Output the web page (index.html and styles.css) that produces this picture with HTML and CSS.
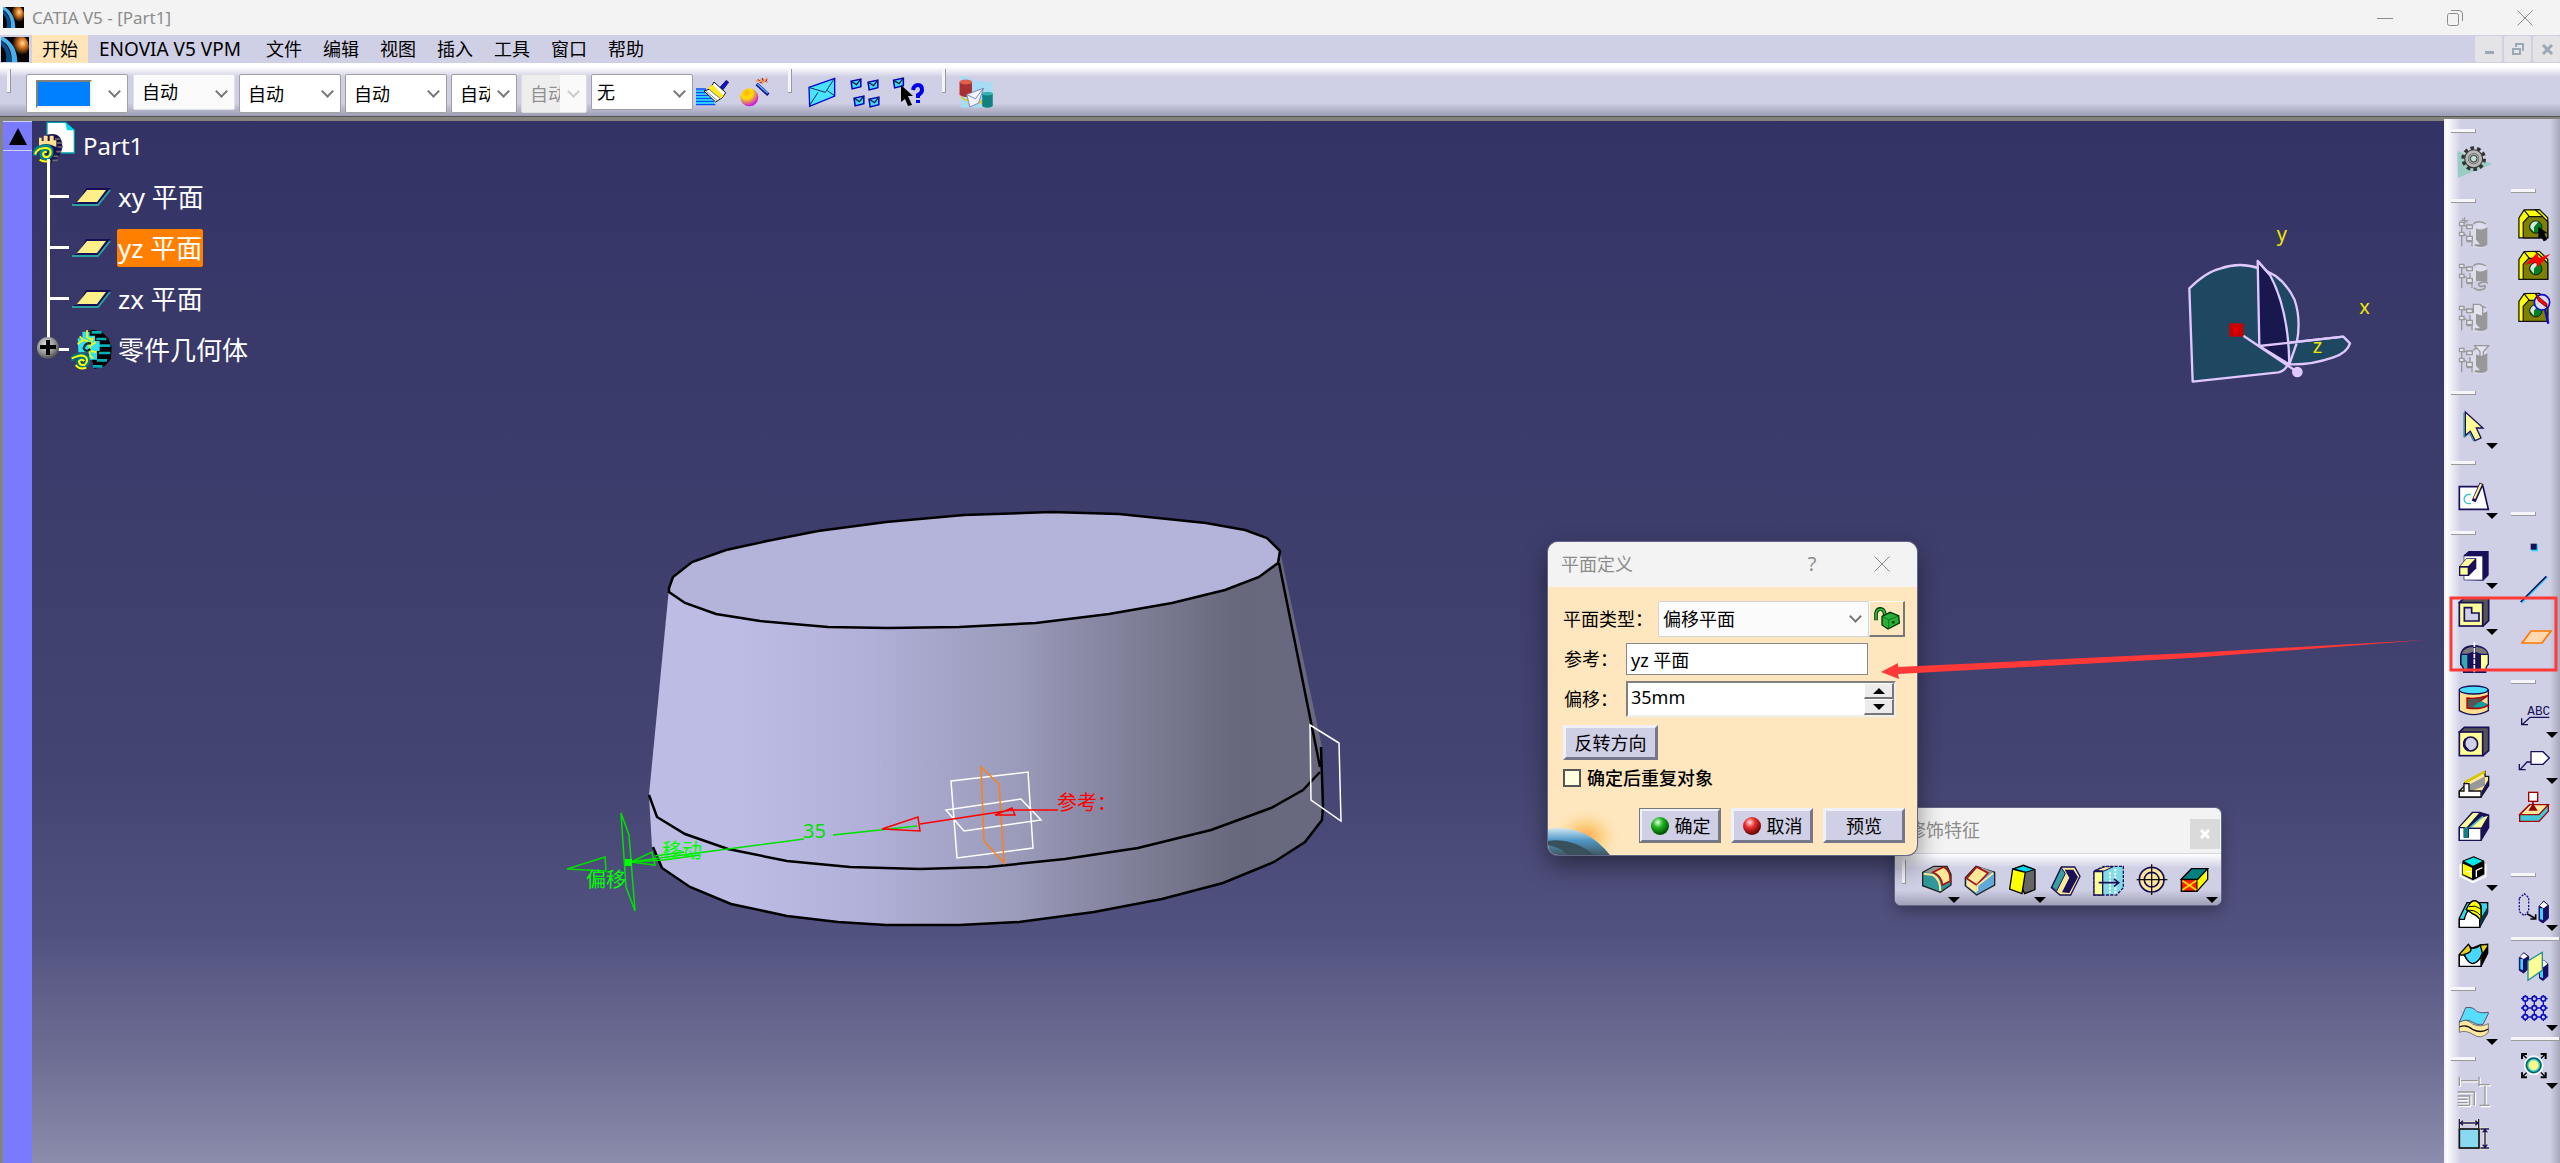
FILE: index.html
```html
<!DOCTYPE html>
<html lang="zh-CN">
<head>
<meta charset="utf-8">
<title>CATIA V5 - [Part1]</title>
<link rel="stylesheet" href="styles.css">
</head>
<body>
<svg class="defs" aria-hidden="true">
  <defs>
    <radialGradient id="glow" cx="65%" cy="35%" r="55%"><stop offset="0" stop-color="#ffd9a0"/><stop offset=".4" stop-color="#d87820"/><stop offset="1" stop-color="#0a0404"/></radialGradient>
    <radialGradient id="ball" cx="35%" cy="25%" r="80%"><stop offset="0" stop-color="#ffb000"/><stop offset=".4" stop-color="#ffe000"/><stop offset="1" stop-color="#c000ff"/></radialGradient>
    <radialGradient id="green" cx="38%" cy="30%" r="70%"><stop offset="0" stop-color="#e8ffe0"/><stop offset=".4" stop-color="#20b820"/><stop offset="1" stop-color="#004a00"/></radialGradient>
    <radialGradient id="red" cx="38%" cy="30%" r="70%"><stop offset="0" stop-color="#ffe8e0"/><stop offset=".4" stop-color="#f03030"/><stop offset="1" stop-color="#600000"/></radialGradient>
    <radialGradient id="steel" cx="40%" cy="35%" r="70%"><stop offset="0" stop-color="#e0e0e0"/><stop offset=".6" stop-color="#909090"/><stop offset="1" stop-color="#404040"/></radialGradient>
    <linearGradient id="side" x1="0" x2="1"><stop offset="0" stop-color="#bcbce4"/><stop offset=".13" stop-color="#bcbce4"/><stop offset=".33" stop-color="#b0b0d8"/><stop offset=".55" stop-color="#9a9aba"/><stop offset=".72" stop-color="#7f7f98"/><stop offset=".87" stop-color="#68687c"/><stop offset="1" stop-color="#686880"/></linearGradient>
    <symbol id="logo" viewBox="0 0 24 24"><rect width="24" height="24" fill="#080404"/><ellipse cx="16" cy="9" rx="8" ry="10" fill="url(#glow)"/><path d="M2 0C9 4 14 12 14 24H9C10 14 6 6 0 3V0Z" fill="#48b0f0"/><path d="M0 3C6 8 9 15 9 24H4Q6 14 0 8Z" fill="#0a4c88"/></symbol>
    <symbol id="mail" viewBox="0 0 12 11"><path d="M1 3L10 1V8L2 10Z" fill="#48d8ff" stroke="#0000c0" stroke-width="1.4"/><path d="M1 3L6 6L10 1" fill="none" stroke="#102040" stroke-width="1.2"/></symbol>
    <symbol id="plane" viewBox="0 0 40 20"><path d="M14 1H39L27 18H0L3 16H6Z" fill="#160f55"/><path d="M0 18H26L38 3" fill="none" stroke="#2aa0a0" stroke-width="2"/><path d="M15 3H34L25 15H5Z" fill="#ffef88"/></symbol>
    <symbol id="block" viewBox="0 0 100 100"><path d="M3 95V30L20 4L70 3L97 30V95Z" fill="#ffff00" stroke="#111" stroke-width="4"/><path d="M17 95V45L35 26H80L97 42V95Z" fill="#808000" stroke="#111" stroke-width="4"/><path d="M20 5L37 26M55 3L82 26" stroke="#111" stroke-width="4"/><circle cx="58" cy="60" r="20" fill="#008020" stroke="#111" stroke-width="3"/><path d="M40 62A19 19 0 0 1 66 43L52 60V76Z" fill="#d8e8e8"/></symbol>
    <symbol id="tree-grey" viewBox="0 0 90 90"><path d="M34 20h18q0-10 16-10t16 10v62q-12 8-36 4l-14-16z" fill="#ddddeb"/><path d="M52 28q14 9 34-3v52q-12 12-38 4v-5h16l-12-14z" fill="#989898"/><path d="M9 12v70M9 20h14M9 48h14M24 68h16v14M44 14q14-12 38 1M34 36v18" fill="none" stroke="#989898" stroke-width="4"/><path d="M2 10h14v10H2zM24 18h17v11H24zM2 40h14v10H2zM24 52h17v13H24z" fill="#e4e4ee" stroke="#989898" stroke-width="4"/></symbol>
  </defs>
</svg>

<header class="titlebar">
  <svg class="titlebar-logo" viewBox="0 0 24 24"><use href="#logo"/></svg>
  <h1>CATIA V5 - [Part1]</h1>
  <button class="caption" aria-label="最小化"><svg width="16" height="16"><path d="M0 8.500H16"/></svg></button>
  <button class="caption" aria-label="还原"><svg width="16" height="16"><rect x=".5" y="3.500" width="11" height="12" rx="2"/><path d="M4 .5H12Q15.500 .5 15.500 4V11"/></svg></button>
  <button class="caption" aria-label="关闭"><svg width="16" height="16"><path d="M.5 .5L15.500 15.500M15.500 .5L.5 15.500"/></svg></button>
</header>

<nav class="menubar">
  <svg class="menubar-logo" viewBox="0 0 24 24" preserveAspectRatio="none"><use href="#logo"/></svg>
  <button class="menu-item menu-active">开始</button>
  <button class="menu-item menu-latin">ENOVIA V5 VPM</button>
  <button class="menu-item">文件</button>
  <button class="menu-item">编辑</button>
  <button class="menu-item">视图</button>
  <button class="menu-item">插入</button>
  <button class="menu-item">工具</button>
  <button class="menu-item">窗口</button>
  <button class="menu-item">帮助</button>
  <div class="mdi">
    <button aria-label="最小化"><svg width="14" height="14"><rect x="3" y="9" width="9" height="3" fill="#9aa8b8"/></svg></button>
    <button aria-label="还原"><svg width="14" height="14" fill="none" stroke="#9aa8b8" stroke-width="2"><rect x="2" y="7" width="7" height="5"/><path d="M5 5V2H12V8H11"/></svg></button>
    <button aria-label="关闭"><svg width="14" height="14"><path d="M3 3L12 12M12 3L3 12" stroke="#9aa8b8" stroke-width="3"/></svg></button>
  </div>
</nav>

<div class="toolbar">
  <span class="grip"></span>
  <div class="combos">
    <button class="combo color-combo" aria-label="颜色"><span class="swatch"></span><i class="chev"></i></button>
    <label class="combo flat"><select aria-label="透明度"><option>自动</option></select><i class="chev"></i></label>
    <label class="combo"><select aria-label="线宽"><option>自动</option></select><i class="chev"></i></label>
    <label class="combo"><select aria-label="线型"><option>自动</option></select><i class="chev"></i></label>
    <label class="combo narrow"><select aria-label="点符号"><option>自动</option></select><i class="chev"></i></label>
    <label class="combo narrow off"><select aria-label="渲染样式" disabled><option>自动</option></select><i class="chev"></i></label>
    <label class="combo layer"><select aria-label="图层"><option>无</option></select><i class="chev"></i></label>
  </div>
  <div class="tools">
    <button class="tool" aria-label="格式刷"><svg viewBox="170 235 108 96"><path d="M173 268h30M173 278h36M173 287h42M173 296h50M173 305h54M173 315h58" stroke="#0050ff" stroke-width="4"/><path d="M173 273h30M173 282h38M173 292h46M173 301h54M173 310h56" stroke="#00c8ff" stroke-width="4"/><path d="M245 263L264 242L271 248L254 270Z" fill="#1010e0" stroke="#001" stroke-width="2"/><path d="M227 247L262 279L252 294L232 307L197 274L215 268Z" fill="#fff" stroke="#111" stroke-width="3"/><path d="M223 255L256 288L246 297L208 265Z" fill="#ffe820"/><path d="M204 275L236 302M213 270L246 297" stroke="#444" stroke-width="2"/></svg></button>
    <button class="tool" aria-label="向导"><svg viewBox="298 226 108 108"><circle cx="335" cy="290" r="27" fill="url(#ball)"/><path d="M357 250L392 282" stroke="#10108a" stroke-width="10"/><path d="M359 250L390 278" stroke="#58b8ff" stroke-width="4"/><path d="M352 242l8-8 6 5 6-8 8 5 12-6-4 10 4 8-10-5-8 8-6-7z" fill="#f0a050"/><path d="M362 236l4 5M374 232l2 8M388 236l-4 8M366 246h6" stroke="#9010a0" stroke-width="3"/></svg></button>
  </div>
  <span class="grip"></span>
  <div class="tools mail-tools">
    <button class="tool" aria-label="发送"><svg viewBox="506 222 108 108"><path d="M521 262L598 235V288L523 319Z" fill="#48e4ff" stroke="#0000d8" stroke-width="4"/><path d="M523 263L570 277L596 237M523 316L548 277M596 286L576 272" fill="none" stroke="#103060" stroke-width="3"/></svg></button>
    <button class="tool" aria-label="发送多个"><svg viewBox="0 0 36 36"><use href="#mail" x="3" y="4" width="13" height="12"/><use href="#mail" x="20" y="5" width="13" height="12"/><use href="#mail" x="6" y="21" width="13" height="12"/><use href="#mail" x="21" y="22" width="13" height="12"/></svg></button>
    <button class="tool" aria-label="这是什么"><svg viewBox="0 0 36 36"><use href="#mail" x="2" y="3" width="14" height="12"/><path d="M11 11L23 22H18L22 31L18 32L15 25L11 28Z" fill="#000"/><path d="M23 16Q24 11 28 11Q32 11 32 16Q32 19 28 21V24M28 26V29" fill="none" stroke="#0000f0" stroke-width="4"/></svg></button>
  </div>
  <span class="grip"></span>
  <button class="tool" aria-label="数据交换"><svg viewBox="970 222 116 116"><path d="M978 226L1028 244L1082 250V330H978Z" fill="#a8dcf4"/><path d="M975 248q20-14 40 0v42q-20 12-40 0z" fill="#a83030"/><ellipse cx="995" cy="248" rx="20" ry="8" fill="#e06050"/><path d="M980 294Q985 306 1010 308M1040 314l10-8v4h12v-6l10 8-10 10v-6h-12z" fill="none" stroke="#e0c820" stroke-width="5"/><path d="M1048 286q17-10 34 0v40q-17 10-34 0z" fill="#108080"/><ellipse cx="1065" cy="285" rx="17" ry="6" fill="#38b0b0"/><path d="M998 288L1052 268L1036 316L1008 328Z" fill="#f4f4ff" stroke="#7880b0" stroke-width="3"/><path d="M998 288L1026 302L1052 268" fill="none" stroke="#7880b0" stroke-width="3"/></svg></button>
</div>

<main class="workspace">
  <div class="scroll-strip"><button aria-label="向上滚动"><svg width="18" height="17"><path d="M9 0L18 17H0Z"/></svg></button></div>

  <section class="viewport">
    <ul class="spec-tree">
      <li class="root">
        <svg width="44" height="42" viewBox="0 0 132 126"><path d="M42 4H97L124 28V96H42Z" fill="#fff" stroke="#00a0a8" stroke-width="4"/><path d="M97 4L124 28H102Z" fill="#00d8f0"/><path d="M40 42Q86 28 88 76Q86 110 56 124Q30 120 40 42Z" fill="#181050"/><path d="M66 54h16M72 66h16M74 78h16M70 92h14M62 106h14M58 118h16" stroke="#707070" stroke-width="5"/><path d="M18 74V50h8v10h6V44h12v16h6V44h12v14h8v20Q40 62 18 74Z" fill="#ffe090"/><path d="M42 92Q30 84 26 98Q26 112 44 110Q56 104 54 88Q50 74 28 78Q6 82 4 104" fill="none" stroke="#008890" stroke-width="14"/><path d="M42 94Q32 90 30 99Q32 110 44 108Q56 102 52 88Q46 78 30 82Q12 84 6 100M20 116Q34 126 52 118" fill="none" stroke="#ffff00" stroke-width="6"/></svg>
        <span>Part1</span>
      </li>
      <li class="leaf"><svg width="40" height="20"><use href="#plane"/></svg><span>xy 平面</span></li>
      <li class="leaf"><svg width="40" height="20"><use href="#plane"/></svg><span class="picked">yz 平面</span></li>
      <li class="leaf"><svg width="40" height="20"><use href="#plane"/></svg><span>zx 平面</span></li>
      <li class="leaf body">
        <svg class="node" width="24" height="24"><circle cx="12" cy="12" r="11" fill="url(#steel)"/><path d="M12 4V19M4 11H20" stroke="#000" stroke-width="4"/></svg>
        <svg width="42" height="42" viewBox="0 0 126 126"><path d="M42 10L66 2L92 8L112 28L122 54L120 90L100 112L70 120Z" fill="#000"/><path d="M62 10h30M76 30h30M82 50h36M84 72h34M78 94h30M66 112h28" stroke="#00b0b8" stroke-width="8"/><path d="M20 28h14V8h22v12h16v16h14v30h-8v26H54V70H22z" fill="#30e0f0"/><path d="M26 22l10 10M48 4v20l12 8M66 26l-8 20M20 46q24-24 36 0v30M74 40l-16 10M76 70l-16-4M66 88l-10-10" fill="none" stroke="#e8f820" stroke-width="6"/><path d="M60 44Q44 38 38 58Q44 72 58 60" fill="none" stroke="#103030" stroke-width="7"/><path d="M40 94Q30 84 22 96Q22 112 38 110Q54 104 48 86Q38 74 20 80Q4 82 2 96" fill="none" stroke="#007880" stroke-width="14"/><path d="M40 96Q32 88 24 97Q26 110 40 108Q52 100 46 86Q36 76 18 82L2 88M14 108Q26 124 46 116" fill="none" stroke="#ffff00" stroke-width="6"/></svg>
        <span>零件几何体</span>
      </li>
    </ul>

    <svg class="model" width="800" height="440" viewBox="560 500 800 440">
      <path d="M669 588L649 795L652 847L662 868L690 887L731 904L787 916L838 922L886 925H959L1019 922L1094 912L1162 899L1223 883L1274 862L1305 842L1323 820L1322 747L1280 551Z" fill="url(#side)"/>
      <path d="M669 588L673 577L692 562L726 550L767 541L818 531L886 522L964 515L1051 512L1119 514L1206 523L1245 530L1267 538L1280 551L1278 563L1259 577L1225 590L1172 603L1109 614L1036 623L959 627L888 628L828 627L760 621L716 614L685 603L669 592Z" fill="#b4b4da" stroke="#000" stroke-width="2.500"/>
      <g fill="none" stroke="#000" stroke-width="2.500">
        <path d="M649 795L657 817L685 834L728 849L787 861L850 867L920 869L988 867L1065 859L1138 848L1211 830L1271 808L1303 790L1320 772"/>
        <path d="M653 847L662 868L690 887L731 904L787 916L838 922L886 925H959L1019 922L1094 912L1162 899L1223 883L1274 862L1305 842L1322 820L1323 806L1321 747M1279 563L1320 767"/>
      </g>
      <g fill="none" stroke="#fff" stroke-width="1.500">
        <path d="M951 781L1028 772L1033 848L957 858Z"/><path d="M946 810L1021 799L1041 820L964 831Z"/><path d="M1310 725L1339 743L1341 821L1311 800Z"/>
      </g>
      <path d="M981 767L999 784L1004 863L984 841Z" fill="none" stroke="#ff8010" stroke-width="1.500"/>
      <g fill="none" stroke="#00e000" stroke-width="1.500">
        <path d="M917 826L833 835M804 839L629 862M621 813L629 835L635 911L626 887ZM567 869L605 857L606 871ZM631 862L652 852L655 865ZM631 862L664 860L700 855M655 856L684 852"/>
      </g>
      <rect x="625" y="859" width="7" height="7" fill="#00ff00"/>
      <path d="M1058 810H1012L920 824M995 815L1012 808L1015 815ZM882 829L918 817L920 831Z" fill="none" stroke="#ff0000" stroke-width="1.500"/>
      <g class="model-text">
        <text x="803" y="838" fill="#00e000">35</text>
        <text x="662" y="858" fill="#00ff00">移动</text>
        <text x="586" y="887" fill="#00ff00">偏移</text>
        <text x="1057" y="810" fill="#ff0000">参考：</text>
      </g>
    </svg>

    <svg class="compass" width="240" height="210" viewBox="0 0 720 630">
      <g fill="#1e4862" stroke="#e0c8ff" stroke-width="7" stroke-linejoin="round">
        <path d="M88 265Q140 215 180 206Q240 184 300 206Q370 226 404 300Q424 360 410 430Q400 480 380 500Q370 515 355 517L98 545Z"/>
        <path d="M300 438L550 410L570 430Q562 458 520 472Q450 496 385 493Z"/>
        <path d="M293 183L298 438L388 493Q386 330 330 225Z" fill="#18184e"/>
      </g>
      <path d="M250 407L412 516M298 438L550 410M410 430L388 493M293 183L330 225" stroke="#e0c8ff" stroke-width="7"/>
      <circle cx="412" cy="516" r="16" fill="#e0c8ff"/><rect x="208" y="370" width="42" height="40" fill="#c80000"/><rect x="219" y="381" width="18" height="17" fill="#e00000"/>
      <g class="axis"><text x="350" y="122">y</text><text x="598" y="342">x</text><text x="458" y="459">z</text></g>
    </svg>
  </section>

  <aside class="side-tools">
    <div class="column">
      <div class="group"><hr>
        <button class="drop plain" aria-label="零件设计"><svg viewBox="109 71 108 108"><path d="M113 92L218 131L115 172Z" fill="#98ccc4"/><circle cx="162" cy="115" r="32" fill="none" stroke="#333" stroke-width="10" stroke-dasharray="11 9"/><circle cx="162" cy="115" r="22" fill="#a8a8a8" stroke="#333" stroke-width="13"/><circle cx="162" cy="115" r="21" fill="none" stroke="#b8b8b8" stroke-width="9"/><circle cx="162" cy="115" r="10" fill="#c0e0d8" stroke="#333" stroke-width="3"/></svg></button>
      </div>
      <div class="group greys"><hr>
        <button aria-label="结构一" disabled><svg viewBox="-8 -9 108 108"><use href="#tree-grey" width="90" height="90"/><path d="M18 -6v22M6 5h24M10 -2l16 14" stroke="#989898" stroke-width="3"/></svg></button>
        <button aria-label="结构二" disabled><svg viewBox="-8 -9 108 108"><use href="#tree-grey" width="90" height="90"/><path d="M44 60h44v30H44z" fill="#cfcfe5"/><path d="M88 66q-14-8-28 2 0 12 16 6 8 2 0 10-20 8-30-4" fill="none" stroke="#989898" stroke-width="5"/></svg></button>
        <button aria-label="结构三" disabled><svg viewBox="-8 -9 108 108"><use href="#tree-grey" width="90" height="90"/><path d="M44 30V4h20l8 8v26" fill="#e4e4ee" stroke="#989898" stroke-width="4"/></svg></button>
        <button aria-label="结构四" disabled><svg viewBox="-8 -9 108 108"><use href="#tree-grey" width="90" height="90"/><path d="M48 2h42L74 20v14H64V20z" fill="#e4e4ee" stroke="#989898" stroke-width="4"/></svg></button>
      </div>
      <div class="group"><hr>
        <button class="drop" aria-label="选择"><svg viewBox="109 866 108 108"><path d="M137 878L190 926H170L184 956L166 964L152 936L137 948Z" fill="#ffff98" stroke="#181058" stroke-width="4"/><path d="M133 880V954L150 942L162 966" fill="none" stroke="#108090" stroke-width="3"/></svg></button>
      </div>
      <div class="group"><hr>
        <button class="drop" aria-label="草图"><svg viewBox="109 1076 108 108"><path d="M119 1102H190L206 1170H119Z" fill="#fff" stroke="#181058" stroke-width="5"/><path d="M154 1126Q136 1122 133 1140Q136 1156 154 1152" fill="none" stroke="#30c8c8" stroke-width="4"/><path d="M162 1146L186 1092" stroke="#181058" stroke-width="13"/><path d="M164 1138L184 1094" stroke="#fff488" stroke-width="6"/></svg></button>
      </div>
      <div class="group"><hr>
        <button class="drop" aria-label="凸台"><svg viewBox="109 29 108 108"><path d="M134 124V52L148 40H205V110L190 125Z" fill="#181058" stroke="#181058" stroke-width="4"/><rect x="134" y="54" width="54" height="70" fill="#fff"/><path d="M119 84L140 60H170V90L148 112H119Z" fill="#181058"/><path d="M122 83L140 62H166L146 83Z" fill="#ffff98"/><rect x="120" y="86" width="26" height="25" fill="#ffff98" stroke="#181058" stroke-width="4"/></svg></button>
        <button class="drop" aria-label="凹槽"><svg viewBox="109 166 108 108"><path d="M119 192L134 178H207V246L190 262Z" fill="#555" stroke="#181058" stroke-width="5"/><rect x="119" y="192" width="70" height="70" fill="#ffff98" stroke="#181058" stroke-width="5"/><path d="M134 207H156V223H178V247H134Z" fill="#cfcfe5" stroke="#181058" stroke-width="5"/></svg></button>
        <button aria-label="旋转体"><svg viewBox="109 301 108 108"><path d="M123 350Q125 318 163 318Q204 320 206 350V374Q198 380 198 398H132Q132 380 123 374Z" fill="#181058" stroke="#181058" stroke-width="4"/><path d="M126 342Q134 322 160 322V336L143 342Z" fill="#777"/><path d="M168 322Q196 322 204 342H184L168 336Z" fill="#777"/><path d="M126 346H143V394H134Q134 380 126 372Z" fill="#38a8b0"/><path d="M184 346H204V372Q196 380 196 394H184Z" fill="#ffff98"/><path d="M164 308V398" stroke="#fff" stroke-width="5" stroke-dasharray="14 3"/></svg></button>
        <button aria-label="旋转槽"><svg viewBox="109 424 108 108"><path d="M119 448V510Q160 534 206 510V448Z" fill="#ffe090" stroke="#181058" stroke-width="4"/><ellipse cx="162" cy="448" rx="43" ry="12" fill="#48dcff" stroke="#181058" stroke-width="4"/><path d="M206 464Q170 476 142 472V502Q180 508 206 494L180 482Z" fill="#555" stroke="#b00000" stroke-width="4"/><path d="M160 498L184 480L204 492Q180 504 160 498Z" fill="#10a0a0"/></svg></button>
        <button aria-label="孔"><svg viewBox="109 553 108 108"><path d="M119 577L134 563H207V633L190 648Z" fill="#555" stroke="#181058" stroke-width="5"/><rect x="119" y="577" width="70" height="71" fill="#ffff98" stroke="#181058" stroke-width="5"/><circle cx="153" cy="613" r="21" fill="#cfcfe5" stroke="#181058" stroke-width="5"/><path d="M138 598Q126 618 146 632" fill="none" stroke="#181058" stroke-width="7"/></svg></button>
        <button aria-label="肋"><svg viewBox="109 681 108 108"><path d="M119 774V756L135 740V732L196 698V712L207 712V740L184 774Z" fill="#ffe898" stroke="#111" stroke-width="4"/><path d="M146 738L196 712V740L150 758Z" fill="#999"/><path d="M135 730L196 698" stroke="#d8c800" stroke-width="8"/><path d="M119 756H133V734H148V756H184V774H119Z" fill="#fff" stroke="#111" stroke-width="4"/><path d="M186 756L206 722V740L184 774Z" fill="#181058"/></svg></button>
        <button aria-label="开槽"><svg viewBox="109 803 108 108"><path d="M119 900V860L158 816H180L207 824V862L184 900Z" fill="#181058" stroke="#181058" stroke-width="4"/><path d="M121 860L160 818H178L140 862ZM150 862L186 832L205 826L184 862Z" fill="#ffff98"/><path d="M146 866L190 828" stroke="#48b8c8" stroke-width="5"/><path d="M119 862H134V890H146V864H184V900H119Z" fill="#fff" stroke="#181058" stroke-width="4"/><path d="M132 862H146V892H132Z" fill="#108080"/></svg></button>
        <button class="drop" aria-label="实体组合"><svg viewBox="109 31 108 108"><path d="M122 74V110L160 128L198 110V74" fill="none" stroke="#fff" stroke-width="5"/><path d="M128 64L162 50L194 64V104L160 122L128 106Z" fill="#000"/><path d="M130 64L162 52L192 64L160 80Z" fill="#00e8e8" stroke="#000" stroke-width="3"/><path d="M130 72L157 84V116L130 104Z" fill="#ffff00"/><path d="M138 96h14v14M170 112V92l18-8" fill="none" stroke="#fff" stroke-width="4"/></svg></button>
        <button aria-label="多截面实体"><svg viewBox="109 166 108 108"><path d="M119 232L142 186H204V214L180 260H119Z" fill="#38d8e8" stroke="#000" stroke-width="4"/><path d="M119 236H134Q140 210 152 206Q140 196 156 182Q172 176 184 194V240H180V260H119Z" fill="#fff" stroke="#000" stroke-width="4"/><path d="M140 206Q152 180 166 180Q184 186 184 206V240Q170 222 160 220Z" fill="#ffff00" stroke="#000" stroke-width="4"/><path d="M148 198q18-6 34 6M140 210q24-6 42 14" fill="none" stroke="#000" stroke-width="3"/><path d="M182 236L205 196V220L180 260Z" fill="#103040"/></svg></button>
        <button aria-label="已移除多截面实体"><svg viewBox="109 301 108 108"><path d="M119 350L146 320L156 332L182 322L204 320V346L184 386H119Z" fill="#e8d020" stroke="#000" stroke-width="4"/><path d="M119 352H134Q146 378 164 376Q178 370 184 352V386H119Z" fill="#fff" stroke="#000" stroke-width="4"/><path d="M134 350Q160 344 152 330Q168 336 182 322L188 346Q178 376 158 378Q142 374 134 350Z" fill="#48d8ff" stroke="#000" stroke-width="4"/><path d="M186 350L205 322V348L184 386Z" fill="#000"/></svg></button>
      </div>
      <div class="group"><hr>
        <button class="drop" aria-label="厚曲面"><svg viewBox="109 491 108 108"><path d="M119 542Q140 534 160 552Q184 562 206 550V576Q184 600 160 582Q136 568 119 576Z" fill="#ffe8a0" stroke="#777" stroke-width="3"/><path d="M119 560Q140 550 160 568Q184 580 206 566" fill="none" stroke="#111" stroke-width="4"/><path d="M119 546L138 502Q160 498 172 514Q184 520 206 516V520L190 552Q170 556 156 544Q140 534 119 546Z" fill="#58dcff" stroke="#556" stroke-width="3"/></svg></button>
      </div>
      <div class="group"><hr>
        <button aria-label="约束对话框" disabled><svg viewBox="109 708 108 108"><path d="M119 716V744M178 716V744M124 728H174M178 740H210M196 744V800M180 802H210M114 762H164V802M150 772V802M114 774H150M114 784H144M114 794H144M114 802H150" fill="none" stroke="#fff" stroke-width="5" transform="translate(3 3)"/><path d="M119 716V744M178 716V744M124 728H174M178 740H210M196 744V800M180 802H210M114 762H164V802M150 772V802M114 774H150M114 784H144M114 794H144M114 802H150" fill="none" stroke="#989898" stroke-width="4"/></svg></button>
        <button aria-label="约束"><svg viewBox="109 831 108 108"><path d="M119 840V870M177 840V870M180 870H208M180 927H208M196 872V926M120 852H176" stroke="#f4f0b8" stroke-width="9"/><path d="M119 840V868M177 840V868M122 852H175M182 870H208M182 927H208M196 872V924M130 845L122 852L130 859M167 845L175 852L167 859M189 880L196 872L203 880M189 917L196 925L203 917" fill="none" stroke="#181058" stroke-width="4"/><rect x="119" y="870" width="59" height="57" fill="#88d8f0" stroke="#111" stroke-width="5"/></svg></button>
      </div>
    </div>

    <div class="column second">
      <div class="group"><hr>
        <button aria-label="选择体"><svg viewBox="289 254 108 108"><use href="#block" x="292" y="262" width="98" height="92"/><path d="M356 316L384 336H374L382 356L372 360L364 346L356 352Z" fill="#000"/></svg></button>
        <button aria-label="更新"><svg viewBox="289 381 108 108"><use href="#block" x="292" y="388" width="98" height="92"/><path d="M316 432L352 396L358 412L392 398L354 438L348 424Z" fill="#ff0000"/></svg></button>
        <button aria-label="检查"><svg viewBox="289 507 108 108"><use href="#block" x="292" y="514" width="98" height="92"/><circle cx="367" cy="544" r="23" fill="#d8d8f0" stroke="#1010c0" stroke-width="5"/><path d="M348 520L382 548V560L356 540Z" fill="#ff0000" stroke="#400" stroke-width="2"/><path d="M376 566L386 608" stroke="#1010c0" stroke-width="7"/></svg></button>
      </div>
      <div class="group refs"><hr>
        <button aria-label="点"><svg viewBox="289 -33 108 108"><rect x="335" y="13" width="20" height="21" fill="#30d8ff"/><rect x="333" y="11" width="18" height="18" fill="#181058"/></svg></button>
        <button aria-label="直线"><svg viewBox="289 91 108 108"><path d="M306 187L383 109" stroke="#30d8ff" stroke-width="5"/><path d="M303 184L380 107" stroke="#181058" stroke-width="5"/></svg></button>
        <button class="tall" aria-label="平面"><svg viewBox="289 238 108 108"><path d="M334 274H394L367 310H307Z" fill="#ffd8b0" stroke="#ff7800" stroke-width="5"/></svg></button>
      </div>
      <div class="group notes"><hr>
        <button class="drop" aria-label="文本"><svg viewBox="286 466 108 108"><path d="M386 527H328L306 548M303 530V549H322" fill="none" stroke="#181058" stroke-width="4"/><text x="320" y="520" class="abc">ABC</text></svg></button>
        <button class="drop" aria-label="标志注释"><svg viewBox="289 603 108 108"><path d="M334 629H370L389 648L370 667H334Z" fill="#fff" stroke="#181058" stroke-width="4"/><path d="M334 660H322L302 682M299 666V683H318" fill="none" stroke="#181058" stroke-width="4"/></svg></button>
        <button aria-label="基准"><svg viewBox="289 741 108 108"><path d="M300 818L330 788H386V808L358 838H300Z" fill="#40c8d8" stroke="#a00000" stroke-width="4"/><path d="M300 818L330 788H386L358 818Z" fill="#ffe8a0" stroke="#a00000" stroke-width="4"/><path d="M326 806L340 784L354 806Z" fill="#900000"/><path d="M340 778V800" stroke="#900000" stroke-width="5"/><rect x="327" y="751" width="27" height="27" fill="#fff" stroke="#a00000" stroke-width="4"/></svg></button>
      </div>
      <div class="group moves"><hr>
        <button class="drop" aria-label="平移"><svg viewBox="289 151 108 108"><path d="M299 176L314 162L327 174V214L314 228L299 216Z" fill="none" stroke="#181088" stroke-width="4" stroke-dasharray="6 4"/><path d="M322 222L346 236M332 238H348V224" fill="none" stroke="#000" stroke-width="5"/><path d="M358 200L372 184L386 196V236L370 250L358 242Z" fill="#181068" stroke="#181068" stroke-width="3"/><path d="M361 206H370V242L361 238Z" fill="#40d0ff"/><path d="M360 198L372 186L384 196L372 206Z" fill="#fff"/></svg></button>
        <hr class="long">
        <button aria-label="镜像"><svg viewBox="289 321 108 108"><path d="M299 350L312 335L327 346V382L312 396L299 388Z" fill="#181068" stroke="#181068" stroke-width="3"/><path d="M302 354H310V388L302 384Z" fill="#40d0ff"/><path d="M358 372L372 356L386 368V406L370 420L358 412Z" fill="#181068"/><path d="M361 378H370V412L361 408Z" fill="#40d0ff"/><path d="M301 348L312 337L324 346L312 354ZM360 370L372 358L384 368L372 378Z" fill="#fff"/><path d="M325 360L368 334V388L325 418Z" fill="#ffff98" stroke="#209090" stroke-width="4"/></svg></button>
        <button class="drop" aria-label="阵列"><svg viewBox="289 451 108 108"><path d="M317 466V544M344 466V544M371 466V544M304 477H384M304 505H384M304 532H384" stroke="#1010c0" stroke-width="4"/><g fill="#cfcfe5" stroke="#1010c0" stroke-width="5"><circle cx="317" cy="477" r="7"/><circle cx="344" cy="477" r="7"/><circle cx="371" cy="477" r="7"/><circle cx="317" cy="505" r="7"/><circle cx="344" cy="505" r="7"/><circle cx="371" cy="505" r="7"/><circle cx="317" cy="532" r="7"/><circle cx="344" cy="532" r="7"/><circle cx="371" cy="532" r="7"/></g></svg></button>
        <hr class="long">
        <button class="drop" aria-label="缩放"><svg viewBox="289 621 108 108"><path d="M310 641L375 706M375 641L310 706" stroke="#000" stroke-width="4"/><path d="M307 654V639H322M363 639H378V654M378 694V709H363M322 709H307V694" fill="none" stroke="#000" stroke-width="6"/><circle cx="342" cy="673" r="30" fill="#f4f4ff"/><circle cx="342" cy="673" r="21" fill="#ffff88" stroke="#006868" stroke-width="7"/><circle cx="342" cy="673" r="17" fill="none" stroke="#40d0d0" stroke-width="4"/></svg></button>
      </div>
    </div>
  </aside>

  <section class="float-bar">
    <header><h2>修饰特征</h2><button class="float-close" aria-label="关闭"><svg width="10" height="10"><path d="M1 1L9 9M9 1L1 9"/></svg></button></header>
    <div class="float-tools">
      <span class="grip"></span>
      <button class="drop" aria-label="倒圆角"><svg viewBox="116 219 108 108"><path d="M127 250L160 232H200L212 256V288L180 310L127 290Z" fill="#309898" stroke="#222" stroke-width="4"/><path d="M132 250L160 234H186L160 252Z" fill="#999"/><path d="M158 250L190 234Q210 244 210 276L186 288Q184 262 158 250Z" fill="#ffe898" stroke="#b01010" stroke-width="5"/><path d="M130 254L158 258Q180 270 180 306" fill="none" stroke="#ffe898" stroke-width="6"/></svg></button>
      <button aria-label="倒角"><svg viewBox="248 219 108 108"><path d="M258 266L290 232L346 250V288L292 318L258 290Z" fill="#60a8d8" stroke="#222" stroke-width="4"/><path d="M300 232L344 250L322 254Z" fill="#999"/><path d="M292 234L326 252L292 288L262 268Z" fill="#ffe898" stroke="#b01010" stroke-width="5"/><path d="M262 272L292 292V312L262 290Z" fill="#ffe898"/><path d="M294 306V290L342 252" fill="none" stroke="#ffe898" stroke-width="5"/></svg></button>
      <button class="drop" aria-label="拔模"><svg viewBox="377 217 108 108"><path d="M402 238L432 227L467 240V300L436 312Z" fill="#666" stroke="#000" stroke-width="4"/><path d="M402 238L432 228L465 240L438 248Z" fill="#00d8f0" stroke="#000" stroke-width="3"/><path d="M400 238L438 248L428 312L391 298Z" fill="#ffff00" stroke="#000" stroke-width="4"/></svg></button>
      <button aria-label="抽壳"><svg viewBox="510 219 108 108"><path d="M520 296L550 234H590L606 262L578 318H546Z" fill="#ffe898" stroke="#181058" stroke-width="4"/><path d="M522 294L550 236L562 254L536 306Z" fill="#38a0a0" stroke="#181058" stroke-width="3"/><path d="M560 242H586L600 264L574 312L552 310L574 266Z" fill="#181058"/></svg></button>
      <button aria-label="厚度"><svg viewBox="637 219 108 108"><path d="M646 246L676 232H734V296L714 318H646Z" fill="#80dce8" stroke="#181058" stroke-width="4" stroke-dasharray="9 4"/><path d="M646 248H672V318H646Z" fill="#ffff98" stroke="#181058" stroke-width="4"/><path d="M650 244L680 233H704L676 246Z" fill="#ffe898" stroke="#181058" stroke-width="3"/><path d="M694 250V316M710 240V318" stroke="#fff" stroke-width="6" stroke-dasharray="7 4"/><path d="M660 281H718M706 270L720 281L706 292" fill="none" stroke="#181058" stroke-width="5"/></svg></button>
      <button aria-label="内螺纹"><svg viewBox="760 219 108 108"><circle cx="813" cy="272" r="37" fill="#ffe898" stroke="#181058" stroke-width="5"/><circle cx="813" cy="272" r="22" fill="none" stroke="#181058" stroke-width="5"/><path d="M768 272H860M813 226V318" stroke="#111" stroke-width="4"/></svg></button>
      <button class="drop" aria-label="移除面"><svg viewBox="890 222 108 108"><path d="M903 274L934 242H982V274L950 310H903Z" fill="#ffff00" stroke="#000" stroke-width="4"/><path d="M903 274L934 242H982L952 274Z" fill="#008080" stroke="#000" stroke-width="4"/><rect x="904" y="275" width="46" height="34" fill="#ff2000" stroke="#000" stroke-width="3"/><path d="M906 278L948 306M948 278L906 306" stroke="#ffe800" stroke-width="5"/></svg></button>
    </div>
  </section>

  <form class="dialog" onsubmit="return false">
    <header><h2>平面定义</h2><button type="button" class="dlg-cap" aria-label="帮助">?</button><button type="button" class="dlg-cap" aria-label="关闭"><svg width="16" height="16"><path d="M.5 .5L15.500 15.500M15.500 .5L.5 15.500"/></svg></button></header>
    <div class="dialog-body">
      <svg class="corner" width="72" height="48" viewBox="0 0 72 48"><defs><radialGradient id="sun"><stop offset="0" stop-color="#ffa850"/><stop offset=".4" stop-color="#fbd080"/><stop offset="1" stop-color="#fee6be" stop-opacity="0"/></radialGradient><linearGradient id="earth" x1="0" y1="0" x2="0" y2="1"><stop offset="0" stop-color="#d0e8f0"/><stop offset=".45" stop-color="#5098c8"/><stop offset="1" stop-color="#405860"/></linearGradient></defs><ellipse cx="38" cy="30" rx="36" ry="30" fill="url(#sun)"/><path d="M0 22Q36 16 62 48H0Z" fill="url(#earth)"/><path d="M0 34Q24 30 46 48H20Q12 40 0 38Z" fill="#38505a"/></svg>
      <div class="field type-field"><label for="ptype">平面类型：</label>
        <span class="type-select"><select id="ptype"><option>偏移平面</option></select><i class="chev"></i></span>
        <button type="button" class="lock" aria-label="锁定"><svg width="26" height="24" viewBox="0 0 78 72"><path d="M6 40V18Q10 4 22 6Q32 10 32 22V40" fill="none" stroke="#003800" stroke-width="11"/><path d="M6 38V18Q10 5 22 7Q32 10 32 22V38" fill="none" stroke="#30c040" stroke-width="5"/><path d="M24 28L48 16L74 26L76 48L42 66L24 54Z" fill="#28b038" stroke="#003800" stroke-width="4"/><path d="M26 30L44 38L72 28M44 38V64" fill="none" stroke="#107820" stroke-width="3"/><circle cx="58" cy="46" r="4" fill="#004000"/></svg></button>
      </div>
      <div class="field"><label for="pref">参考：</label><input id="pref" class="ref" type="text" value="yz 平面"></div>
      <div class="field"><label for="poff">偏移：</label>
        <span class="spin"><input id="poff" type="text" value="35mm"><span class="spin-keys"><button type="button" aria-label="增加"><i class="up"></i></button><button type="button" aria-label="减少"><i class="down"></i></button></span></span>
      </div>
      <button type="button" class="push reverse">反转方向</button>
      <label class="repeat"><input type="checkbox">确定后重复对象</label>
      <div class="actions">
        <button class="push primary"><svg width="20" height="20"><circle cx="10" cy="10" r="9" fill="url(#green)"/></svg>确定</button>
        <button type="button" class="push"><svg width="20" height="20"><circle cx="10" cy="10" r="9" fill="url(#red)"/></svg>取消</button>
        <button type="button" class="push">预览</button>
      </div>
    </div>
  </form>

  <svg class="callout" width="700" height="100" viewBox="1860 590 700 100"><rect x="2451" y="598" width="105" height="72" fill="none" stroke="#ff3838" stroke-width="3"/><path d="M1881 672L1898 663V667L2190 653L2425 640L2190 658L1898 674L1899 679Z" fill="#ff3838"/></svg>
</main>
</body>
</html>
```
FILE: styles.css
```css
* { box-sizing: border-box; }
body {
  margin: 0;
  height: 100vh;
  display: flex;
  flex-direction: column;
  overflow: hidden;
  background: #cfcfe5;
  color: #000;
  font: 18px/24px "Noto Sans", "Noto Sans CJK SC", sans-serif;
}
button, select, input { font: inherit; color: inherit; margin: 0; padding: 0; border: 0; background: none; border-radius: 0; }
button { display: flex; align-items: center; justify-content: center; }
h1, h2 { margin: 0; font-weight: 400; color: #8c8c8c; }
svg { display: block; flex: none; }
.defs { position: absolute; width: 0; height: 0; }

/* window title */
.titlebar { display: flex; align-items: center; height: 35px; background: #f3f3f3; flex: none; }
.titlebar-logo { width: 21px; height: 21px; margin: 0 8px 0 3px; }
.titlebar h1 { font-size: 17px; flex: 1; }
.caption { width: 70px; height: 33px; }
.caption svg, .dlg-cap svg { fill: none; stroke: #8c8c8c; stroke-width: 1; overflow: visible; }

/* menus */
.menubar { display: flex; align-items: center; height: 28px; flex: none; gap: 1px; background: #cfcfe5; }
.menubar-logo { width: 28px; height: 25px; margin: 0 2px 0 1px; }
.menu-item { height: 28px; padding: 0 10px; }
.menu-active { background: #ffe4b8; }
.menu-latin { font-size: 19px; padding-right: 14px; }
.mdi { display: flex; gap: 2px; margin-left: auto; }
.mdi button { width: 27px; height: 26px; background: #e4e4e6; border-radius: 2px; }

/* top toolbar */
.toolbar {
  display: flex;
  height: 58px;
  flex: none;
  padding-left: 7px;
  border-bottom: 4px solid #84847c;
  box-shadow: inset 0 -1px #555;
  background: linear-gradient(#fff 0, #fff 4px, #cfcfe5 14px, #cfcfe5 40px, #9c9cb2 53px);
}
.grip { width: 4px; height: 24px; margin-top: 6px; flex: none; background: #f4f4fa; border-right: 1px solid #999; border-bottom: 1px solid #999; }
.combos { display: flex; gap: 4px; margin: 11px 0 0 15px; align-items: flex-start; }
.combo { display: flex; position: relative; width: 102px; height: 39px; background: #fff; border: 1px solid #a0a0a0; border-radius: 2px; }
.combo select { appearance: none; width: 100%; padding: 0 30px 0 8px; opacity: 1; }
.flat { border-color: #e0e0e8; height: 36px; background: #fbfbfb; margin-left: 1px; }
.narrow { width: 66px; }
.narrow select { padding-right: 26px; }
.off { color: #909090; border-color: #ddd; background: linear-gradient(90deg, #eee 38px, #fafafa 38px); }
.layer { height: 36px; }
.layer select { padding-left: 5px; }
.chev { position: absolute; right: 8px; top: 12px; width: 9px; height: 9px; border: solid #777; border-width: 0 2px 2px 0; transform: rotate(45deg); }
.off .chev { border-color: #ccc; }
.color-combo { justify-content: flex-start; padding-left: 9px; }
.swatch { width: 56px; height: 28px; background: #0080ff; border: 2px solid #f4f4f4; border-top-color: #808080; border-left-color: #808080; }
.tools { display: flex; margin: 13px 15px 0 2px; gap: 6px; }
.tool { width: 36px; height: 36px; }
.tool svg { width: 36px; height: 36px; }
.mail-tools { margin: 11px 16px 0 12px; gap: 7px; }
.toolbar > .tool { margin: 11px 0 0 12px; }

/* workspace */
.workspace { position: relative; flex: 1; display: flex; min-height: 0; }
.scroll-strip { width: 32px; flex: none; background: #7a7aff; border-left: 3px solid #84847c; }
.scroll-strip button { width: 29px; height: 30px; border-top: 1px solid #d0d0ff; border-bottom: 1px solid #d0d0ff; }
.viewport { flex: 1; position: relative; overflow: hidden; background: linear-gradient(#333366 0, #3d3d6c 36%, #444472 62%, #525280 78%, #6e6e94 90%, #8c8cac 100%); }

.spec-tree { position: relative; margin: 0; padding: 0; list-style: none; color: #fff; font-size: 26px; line-height: 38px; }
.spec-tree::before { content: ""; position: absolute; left: 15px; top: 38px; width: 3px; height: 186px; background: #fff; z-index: 1; }
.spec-tree li { display: flex; align-items: center; height: 51px; }
.spec-tree .root { gap: 6px; height: 50px; padding-left: 1px; }
.root svg { align-self: flex-start; }
.root span { font-size: 24px; }
.leaf { padding-left: 17px; gap: 5px; position: relative; }
.leaf::before { content: ""; width: 20px; height: 3px; background: #fff; margin-right: -2px; flex: none; }
.leaf span { padding: 0 1px; border-radius: 2px; }
.leaf .picked { background: #ff8000; }
.leaf.body { gap: 4px; }
.node { position: absolute; left: 4px; top: 12px; z-index: 2; }

.model { position: absolute; left: 528px; top: 379px; }
.model-text { font-size: 20px; }
.compass { position: absolute; right: 44px; top: 79px; }
.axis { font-size: 60px; fill: #f0e800; }

/* right toolbars */
.side-tools { width: 116px; flex: none; display: flex; margin-top: -2px; padding-left: 7px; border-left: 2px solid #f4f4f0; background: linear-gradient(90deg, #fff 0, #cfcfe5 15px, #cfcfe5 104px, #a8a8bc 114px); overflow: hidden; }
.column { width: 60px; margin-left: -2px; flex: none; }
.second { width: 49px; margin-left: 0; padding-top: 60px; }
.group { display: flow-root; }
.group hr { width: 25px; height: 4px; margin: 10px 0; border: 0; background: #f6f6fa; border-right: 1px solid #999; border-bottom: 1px solid #999; }
.group .long { width: 49px; margin: 4px 0; }
.side-tools button { position: relative; width: 46px; height: 42px; }
.side-tools .drop { height: 46px; padding-bottom: 4px; }
.side-tools .plain { padding-bottom: 8px; }
.side-tools svg { width: 36px; height: 36px; overflow: visible; }
.side-tools .tall { height: 54px; }
.drop::after { content: ""; position: absolute; right: -1px; bottom: 2px; border: 6px solid transparent; border-top-color: #000; border-bottom: 0; }
.plain::after { display: none; }
.refs { margin-top: 173px; }
.notes { margin-top: 6px; }
.moves { margin-top: 35px; }
.abc { font: 38px "Liberation Mono", monospace; fill: #181058; }

/* floating toolbar */
.float-bar { position: absolute; right: 339px; top: 687px; width: 326px; border-radius: 6px; overflow: hidden; box-shadow: 0 0 0 1px #66668a, 0 6px 16px #0005; background: #f3f3f3; }
.float-bar header { display: flex; height: 45px; align-items: center; justify-content: space-between; padding: 0 1px 2px 13px; }
.float-bar h2, .dialog h2 { font-size: 18px; }
.float-close { width: 30px; height: 30px; margin-top: 8px; background: #dadada; }
.float-close svg { stroke: #fff; stroke-width: 3; }
.float-tools { display: flex; height: 52px; padding-left: 7px; border-top: 1px solid #d8d8e4; background: linear-gradient(#fff, #cfcfe5 14px, #cfcfe5 36px, #9c9cb2 52px); }
.float-tools button { position: relative; width: 43px; height: 52px; }
.float-tools .grip + button { margin-left: 9px; }
.float-tools svg { width: 36px; height: 36px; overflow: visible; }
.float-tools .drop::after { right: -2px; bottom: 3px; }

/* plane definition dialog */
.dialog { position: absolute; right: 643px; top: 421px; width: 369px; border-radius: 10px; overflow: hidden; background: #fee6be; box-shadow: 0 0 0 1px #66668a, 0 10px 26px #0007; }
.dialog header { display: flex; align-items: center; height: 45px; padding: 0 0 2px 13px; background: #f3f3f3; }
.dialog h2 { flex: 1; }
.dlg-cap { width: 70px; height: 43px; color: #8c8c8c; font-size: 20px; }
.dialog-body { position: relative; display: flex; flex-direction: column; padding: 14px 12px 12px 15px; }
.corner { position: absolute; left: 0; bottom: 0; }
.field { display: flex; align-items: center; margin-bottom: 6px; }
.field label { width: 63px; padding-left: 1px; flex: none; }
.type-field label { width: 95px; padding-left: 0; }
.type-select { position: relative; display: flex; width: 211px; height: 36px; background: #fbfbfb; border: 1px solid #d4d4d4; border-radius: 2px; }
.type-select select { appearance: none; width: 100%; padding: 0 30px 0 4px; }
.type-select .chev { top: 10px; }
.lock { width: 36px; height: 36px; background: #fee6be; border: 1px solid #fff; border-right: 2px solid #777; border-bottom: 2px solid #777; }
.ref { width: 242px; height: 32px; padding: 0 4px; background: #fff; border: 1px solid #888; }
.spin { display: flex; width: 270px; height: 36px; background: #fff; border: 2px solid #808080; border-right-color: #eee; border-bottom-color: #eee; }
.spin input { flex: 1; min-width: 0; padding: 0 3px 4px; }
.spin-keys { width: 30px; display: flex; flex-direction: column; }
.spin-keys button { flex: 1; background: #ececec; border: 1px solid #fff; border-right: 2px solid #777; border-bottom: 2px solid #777; }
.up { border: 6px solid transparent; border-bottom-color: #000; border-top: 0; }
.down { border: 6px solid transparent; border-top-color: #000; border-bottom: 0; }
.push { width: 82px; height: 35px; gap: 5px; background: #cfcfe5; border: 3px solid #f0f0fa; border-right-color: #77778c; border-bottom-color: #77778c; }
.primary { outline: 1px solid #777; outline-offset: -1px; }
.reverse { width: 95px; margin-top: 2px; }
.repeat { display: flex; align-items: center; gap: 6px; margin-top: 6px; font-weight: 500; }
.repeat input { appearance: none; width: 18px; height: 18px; background: #ffffe0; border: 2px solid #555; }
.actions { position: relative; display: flex; justify-content: flex-end; gap: 10px; margin-top: 18px; }

/* red annotation */
.callout { position: absolute; right: 0; top: 469px; pointer-events: none; }
```
